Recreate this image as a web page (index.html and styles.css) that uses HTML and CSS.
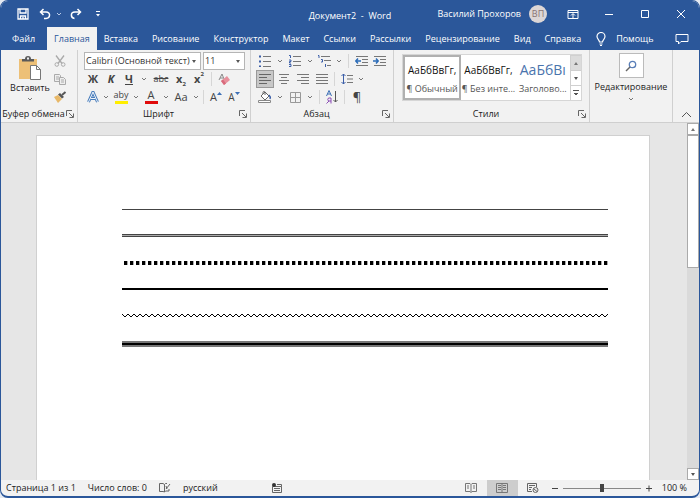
FILE: index.html
```
<!DOCTYPE html>
<html lang="ru">
<head>
  <meta charset="UTF-8">
  <meta name="viewport" content="width=device-width, initial-scale=1.0">
  <title>Документ2 - Word</title>
  <link rel="stylesheet" href="styles.css">
</head>
<body>
<svg class="defs" aria-hidden="true">
  <symbol id="chev" viewBox="0 0 6 6"><path d="M1 2l2 2 2-2" fill="none" stroke="#777"/></symbol>
  <symbol id="launch" viewBox="0 0 8 8"><path d="M.5 6V.5H6M3 3l4 4M7.500 3.500v4h-4" fill="none" stroke="#666"/></symbol>
</svg>

<div class="window">
  <header class="titlebar">
    <div class="quick">
      <button aria-label="Сохранить"><svg width="12" height="12" viewBox="0 0 12 12"><path d="M1 1h10v10H1zM3 1v4h6V1M3.500 11V8h5v3M6 9v2" fill="none" stroke="#fff" stroke-width="1.300"/></svg></button>
      <button aria-label="Отменить"><svg width="12" height="12" viewBox="0 0 12 12"><path d="M4.500 1L1.500 4l3 3M1.500 4H7c5 0 4.500 6 0 6.500H5" fill="none" stroke="#fff" stroke-width="1.500"/></svg></button>
      <button class="narrow" aria-label="Список отмены"><svg width="6" height="6" viewBox="0 0 6 6"><path d="M1 2l2 2 2-2" fill="none" stroke="#b9cbe8"/></svg></button>
      <button aria-label="Повторить"><svg width="12" height="12" viewBox="0 0 12 12"><path d="M7.500 1l3 3-3 3M10.500 4H5C0 4 .5 10 4.500 10.500" fill="none" stroke="#fff" stroke-width="1.500"/></svg></button>
      <button aria-label="Настройка панели"><svg width="6" height="6" viewBox="0 0 6 6"><path d="M1 .5h4" stroke="#fff"/><path d="M1 3h4L3 5.500z" fill="#fff"/></svg></button>
    </div>
    <h1>Документ2&nbsp; -&nbsp; Word</h1>
    <div class="account">
      <span>Василий Прохоров</span>
      <span class="avatar">ВП</span>
      <div class="controls">
        <button aria-label="Параметры ленты"><svg width="12" height="10" viewBox="0 0 12 10"><path d="M1 1.500h10v8H1zM1 3.500h10M6 9V5M4 6.500l2-2 2 2" fill="none" stroke="#fff"/></svg></button>
        <button aria-label="Свернуть"><svg width="10" height="10" viewBox="0 0 10 10"><path d="M1 5.500h8" stroke="#fff"/></svg></button>
        <button aria-label="Развернуть"><svg width="10" height="10" viewBox="0 0 10 10"><path d="M1.500 1.500h7v7h-7z" fill="none" stroke="#fff"/></svg></button>
        <button aria-label="Закрыть"><svg width="10" height="10" viewBox="0 0 10 10"><path d="M1 1l8 8M9 1L1 9" stroke="#fff"/></svg></button>
      </div>
    </div>
  </header>

  <nav class="tabs">
    <a class="file" href="#">Файл</a>
    <a class="active" href="#">Главная</a>
    <a href="#">Вставка</a>
    <a href="#">Рисование</a>
    <a href="#">Конструктор</a>
    <a href="#">Макет</a>
    <a href="#">Ссылки</a>
    <a href="#">Рассылки</a>
    <a href="#">Рецензирование</a>
    <a href="#">Вид</a>
    <a href="#">Справка</a>
    <a class="help" href="#">
      <svg width="10" height="14" viewBox="0 0 10 14"><path d="M3.500 10C3.500 8 1 7 1 4.500a4 4 0 0 1 8 0C9 7 6.500 8 6.500 10zM3.500 12h3M4 13.500h2" fill="none" stroke="#fff" stroke-width="1.200"/></svg>
      <span>Помощь</span>
    </a>
    <button class="comment" aria-label="Примечания"><svg width="14" height="12" viewBox="0 0 14 12"><path d="M1 1.500h12v7H6l-2.500 2.500V8.500H1z" fill="none" stroke="#fff"/></svg></button>
  </nav>

  <section class="ribbon" aria-label="Лента">
    <div class="group clipboard">
      <div class="body">
        <button class="paste">
          <svg width="24" height="24" viewBox="0 0 24 24"><path d="M1 3h18v20H1z" fill="#edc077"/><path d="M4 5.500V3h3a3 3 0 0 1 6 0h3v2.500z" fill="#5a5a5a"/><path d="M9 1.500h2v2H9z" fill="#eee"/><path d="M12.500 9.500h6l4 4v10h-10z" fill="#fff" stroke="#777"/><path d="M18.500 9.500v4h4" fill="none" stroke="#777"/></svg>
          <span>Вставить</span>
          <svg width="6" height="6"><use href="#chev"/></svg>
        </button>
        <div class="stack">
          <button aria-label="Вырезать"><svg width="12" height="12" viewBox="0 0 12 12"><path d="M2 .5l6 8M10 .5l-6 8" stroke="#aaa" stroke-width="1.300"/><circle cx="2.800" cy="9.500" r="1.800" fill="none" stroke="#aaa"/><circle cx="9.200" cy="9.500" r="1.800" fill="none" stroke="#aaa"/></svg></button>
          <button aria-label="Копировать"><svg width="12" height="12" viewBox="0 0 12 12"><path d="M.5 1.500h5l1 1v6h-6zM2 4h3M2 6h3" fill="#eee" stroke="#aaa"/><path d="M5.500 4.500h4l2 2v5h-6zM7 7h3M7 9h3" fill="#eee" stroke="#aaa"/></svg></button>
          <button aria-label="Формат по образцу"><svg width="14" height="12" viewBox="0 0 14 12"><path d="M1 6l4-2 4 4-4 4z" fill="#e8b868"/><path d="M5 3.500l2-1.500 4 4-2 1.500z" fill="#555"/><path d="M9 4l3.500-3" stroke="#555" stroke-width="2"/></svg></button>
        </div>
      </div>
      <footer><span>Буфер обмена</span><button aria-label="Буфер обмена: параметры"><svg width="8" height="8"><use href="#launch"/></svg></button></footer>
    </div>

    <div class="group font">
      <div class="body rows">
        <div class="row boxes">
          <label class="combo family"><select aria-label="Шрифт"><option>Calibri (Основной текст)</option></select><i class="arrow"></i></label>
          <label class="combo size"><select aria-label="Размер шрифта"><option>11</option></select><i class="arrow"></i></label>
        </div>
        <div class="row">
          <button class="glyph bold">Ж</button>
          <button class="glyph bold italic">К</button>
          <button class="glyph bold under">Ч</button>
          <button class="drop far" aria-label="Вид подчёркивания"><svg width="6" height="6"><use href="#chev"/></svg></button>
          <button class="glyph mid strike">abc</button>
          <button class="glyph bold">x<sub>2</sub></button>
          <button class="glyph bold">x<sup>2</sup></button>
          <i class="sep"></i>
          <button aria-label="Очистить формат"><svg width="14" height="14" viewBox="0 0 14 14"><path d="M2 8l3-6 2 5M3 6h3" fill="none" stroke="#888"/><path d="M4 9l6-5 3 4-6 5z" fill="#e8909c"/><path d="M4 9l2-1.500 3 4L7 13z" fill="#d86a7c"/></svg></button>
        </div>
        <div class="row">
          <button aria-label="Текстовые эффекты"><svg width="12" height="12" viewBox="0 0 12 12"><path d="M1.500 11L6 1l4.500 10M3.500 7.500h5" fill="none" stroke="#4a7ebb" stroke-width="3"/><path d="M1.500 11L6 1l4.500 10M3.500 7.500h5" fill="none" stroke="#eef4fc"/></svg></button>
          <button class="drop" aria-label="Эффекты"><svg width="6" height="6"><use href="#chev"/></svg></button>
          <button class="glyph mid marker">aby</button>
          <button class="drop" aria-label="Цвет выделения"><svg width="6" height="6"><use href="#chev"/></svg></button>
          <button class="glyph mid colour">A</button>
          <button class="drop" aria-label="Цвет текста"><svg width="6" height="6"><use href="#chev"/></svg></button>
          <button class="glyph mid case">Aa</button>
          <button class="drop" aria-label="Регистр"><svg width="6" height="6"><use href="#chev"/></svg></button>
          <i class="sep"></i>
          <button class="glyph grow">A<svg width="5" height="10" viewBox="0 0 5 10"><path d="M0 3l2.500-3L5 3z" fill="#3b6eb5"/></svg></button>
          <button class="glyph shrink">A<svg width="5" height="10" viewBox="0 0 5 10"><path d="M0 0h5L2.500 3z" fill="#3b6eb5"/></svg></button>
        </div>
      </div>
      <footer><span>Шрифт</span><button aria-label="Шрифт: параметры"><svg width="8" height="8"><use href="#launch"/></svg></button></footer>
    </div>

    <div class="group para">
      <div class="body rows">
        <div class="row">
          <button aria-label="Маркеры"><svg width="12" height="12" viewBox="0 0 12 12"><path d="M4 1.500h8M4 6.500h8M4 11.500h8" stroke="#777"/><path d="M0 1.500h2M0 6.500h2M0 11.500h2" stroke="#3b5ea8" stroke-width="2"/></svg></button>
          <button class="drop far" aria-label="Маркеры: список"><svg width="6" height="6"><use href="#chev"/></svg></button>
          <button aria-label="Нумерация"><svg width="12" height="12" viewBox="0 0 12 12"><path d="M4 1.500h8M4 6.500h8M4 10.500h8" stroke="#777"/><path d="M0 .5h1.500V3M0 5h2v1.500H.5V8H2M0 9.500h2v2H0" fill="none" stroke="#3b5ea8"/></svg></button>
          <button class="drop far" aria-label="Нумерация: список"><svg width="6" height="6"><use href="#chev"/></svg></button>
          <button aria-label="Многоуровневый список"><svg width="13" height="12" viewBox="0 0 13 12"><path d="M3 1.500h9M6 5.500h7M9 10.500h4" stroke="#777"/><path d="M0 .5h1V3M3 4.500h1.500V7H3M7.500 9v3" fill="none" stroke="#3b5ea8"/></svg></button>
          <button class="drop far" aria-label="Уровни"><svg width="6" height="6"><use href="#chev"/></svg></button>
          <i class="sep"></i>
          <button aria-label="Уменьшить отступ"><svg width="13" height="10" viewBox="0 0 13 10"><path d="M1 .5h12M7 3.500h6M7 6.500h6M1 9.500h12" stroke="#777"/><path d="M6 5H1M3 2.500L.8 5 3 7.500" fill="none" stroke="#2b6cb8" stroke-width="1.500"/></svg></button>
          <button aria-label="Увеличить отступ"><svg width="13" height="10" viewBox="0 0 13 10"><path d="M1 .5h12M7 3.500h6M7 6.500h6M1 9.500h12" stroke="#777"/><path d="M0 5h5M3 2.500L5.200 5 3 7.500" fill="none" stroke="#2b6cb8" stroke-width="1.500"/></svg></button>
        </div>
        <div class="row align">
          <button class="pressed" aria-label="По левому краю"><svg width="12" height="10" viewBox="0 0 12 10"><path d="M0 .5h12M0 3.500h8M0 6.500h12M0 9.500h8" stroke="#666"/></svg></button>
          <button aria-label="По центру"><svg width="12" height="10" viewBox="0 0 12 10"><path d="M1 .5h10M3 3.500h6M1 6.500h10M3 9.500h6" stroke="#777"/></svg></button>
          <button aria-label="По правому краю"><svg width="12" height="10" viewBox="0 0 12 10"><path d="M0 .5h12M4 3.500h8M0 6.500h12M4 9.500h8" stroke="#777"/></svg></button>
          <button aria-label="По ширине"><svg width="12" height="10" viewBox="0 0 12 10"><path d="M0 .5h12M0 3.500h12M0 6.500h12M0 9.500h12" stroke="#777"/></svg></button>
          <i class="sep"></i>
          <button aria-label="Интервал"><svg width="12" height="12" viewBox="0 0 12 12"><path d="M6 2.500h6M6 6h6M6 9.500h6" stroke="#777"/><path d="M2.500 1v10M.5 3l2-2 2 2M.5 9l2 2 2-2" fill="none" stroke="#3b5ea8"/></svg></button>
          <button class="drop" aria-label="Интервал: список"><svg width="6" height="6"><use href="#chev"/></svg></button>
        </div>
        <div class="row">
          <button aria-label="Заливка"><svg width="14" height="12" viewBox="0 0 14 12"><path d="M3 5l4-4 4 4-4 4zM5 3V1.500a1 1 0 0 1 2 0V4" fill="#fff" stroke="#666"/><path d="M11 4q2 2 1 4" fill="none" stroke="#3b5ea8" stroke-width="1.500"/><path d="M.5 9.500h12v2H.5z" fill="#fff" stroke="#888"/></svg></button>
          <button class="drop far" aria-label="Заливка: список"><svg width="6" height="6"><use href="#chev"/></svg></button>
          <button aria-label="Границы"><svg width="11" height="11" viewBox="0 0 11 11"><path d="M.5.5h10v10H.5zM5.500 0v11M0 5.500h11" fill="none" stroke="#999"/></svg></button>
          <button class="drop far" aria-label="Границы: список"><svg width="6" height="6"><use href="#chev"/></svg></button>
          <i class="sep"></i>
          <button class="sort" aria-label="Сортировка">
            <svg width="12" height="14" viewBox="0 0 12 14"><path d="M.5 6L3 .5 5.500 6M1.500 4h3" fill="none" stroke="#3b6eb5"/><path d="M5 13.500V8H2.500q-1.500 1.500 0 3H5M3 11L.5 13.500" fill="none" stroke="#8a4db5"/><path d="M9.500 1v11M7.500 10l2 2 2-2" fill="none" stroke="#555"/></svg>
          </button>
          <i class="sep"></i>
          <button class="glyph pilcrow">¶</button>
        </div>
      </div>
      <footer><span>Абзац</span><button aria-label="Абзац: параметры"><svg width="8" height="8"><use href="#launch"/></svg></button></footer>
    </div>

    <div class="group styles">
      <div class="body">
        <div class="gallery">
          <button class="style chosen"><b>АаБбВвГг,</b><span>¶ Обычный</span></button>
          <button class="style"><b>АаБбВвГг,</b><span>¶ Без инте...</span></button>
          <button class="style heading"><b>АаБбВı</b><span>Заголово...</span></button>
          <div class="scroller">
            <button class="off" aria-label="Вверх"><i class="arrow up"></i></button>
            <button aria-label="Вниз"><i class="arrow"></i></button>
            <button aria-label="Все стили"><i class="arrow lined"></i></button>
          </div>
        </div>
      </div>
      <footer><span>Стили</span><button aria-label="Стили: параметры"><svg width="8" height="8"><use href="#launch"/></svg></button></footer>
    </div>

    <div class="group editing">
      <button class="edit">
        <span class="box"><svg width="12" height="12" viewBox="0 0 12 12"><circle cx="7.500" cy="4.500" r="3.200" fill="none" stroke="#5a7fb8" stroke-width="1.300"/><path d="M5 7l-4 4" stroke="#666" stroke-width="1.500"/></svg></span>
        <span>Редактирование</span>
        <svg width="6" height="6"><use href="#chev"/></svg>
      </button>
    </div>
    <button class="collapse" aria-label="Свернуть ленту"><svg width="11" height="7" viewBox="0 0 11 7"><path d="M1 6l4.500-4.500L10 6" fill="none" stroke="#555"/></svg></button>
  </section>

  <main class="workspace">
    <article class="page">
      <hr class="thin">
      <hr class="double">
      <hr class="dots">
      <hr class="thick">
      <svg class="wave" height="5" aria-hidden="true">
        <pattern id="zig" width="6" height="5" patternUnits="userSpaceOnUse"><path d="M-1 0l1 1 3 3 3-3 1-1" fill="none" stroke="#000"/></pattern>
        <rect width="100%" height="5" fill="url(#zig)"/>
      </svg>
      <hr class="triple">
    </article>
    <div class="scrollbar">
      <button aria-label="Прокрутить вверх"><i class="arrow up"></i></button>
      <div class="track"><div class="thumb"></div></div>
      <button aria-label="Прокрутить вниз"><i class="arrow"></i></button>
    </div>
  </main>

  <footer class="status">
    <span>Страница 1 из 1</span>
    <span>Число слов: 0</span>
    <button aria-label="Правописание"><svg width="12" height="10" viewBox="0 0 12 10"><path d="M5.500 9V1.500L4 .5H.5v8H4zl1-1H10V6M5.500 1.500l1-1H8" fill="none" stroke="#666"/><path d="M7 6l4-5M7 3l1 3" stroke="#666" fill="none"/></svg></button>
    <span>русский</span>
    <button class="macro" aria-label="Макрос"><svg width="10" height="10" viewBox="0 0 10 10"><path d="M.5 3.500h9v6h-9zM5 1.500h4.500v2M2 5.500h6M2 7.500h6" fill="none" stroke="#666"/><circle cx="2" cy="2" r="2" fill="#333"/></svg></button>
    <div class="views">
      <button aria-label="Режим чтения"><svg width="12" height="10" viewBox="0 0 12 10"><path d="M6 9.500V1.500L5 .5H.5v8H5zl1-1h4.500v-8H7l-1 1M2 3h2M2 5h2M8 3h2M8 5h2" fill="none" stroke="#777"/></svg></button>
      <button class="on" aria-label="Разметка страницы"><svg width="12" height="10" viewBox="0 0 12 10"><path d="M.5.500h11v9H.5zM6 0v10M2 2.500h3M2 4.500h3M2 6.500h3M7 2.500h3M7 4.500h3M7 6.500h3" fill="none" stroke="#777"/></svg></button>
      <button aria-label="Веб-документ"><svg width="12" height="10" viewBox="0 0 12 10"><path d="M5 8.500H.5v-8h9V4M2 2.500h6M2 4.500h3M2 6.500h2" fill="none" stroke="#666"/><circle cx="8.500" cy="7" r="2.500" fill="#eee" stroke="#666"/><path d="M7 6l3 2.500" stroke="#666"/></svg></button>
      <div class="zoom">
        <button aria-label="Мельче"><svg width="8" height="8" viewBox="0 0 8 8"><path d="M1 4.500h6" stroke="#444"/></svg></button>
        <input type="range" min="0" max="100" value="50" aria-label="Масштаб">
        <button aria-label="Крупнее"><svg width="8" height="8" viewBox="0 0 8 8"><path d="M1 4.500h6M4 1.500v6" stroke="#444"/></svg></button>
        <span>100 %</span>
      </div>
    </div>
  </footer>
</div>
</body>
</html>
```

FILE: styles.css
```
* {
  box-sizing: border-box;
}

body {
  margin: 0;
  background: #e4e9f2;
  font: 9px/14px "Open Sans", "Noto Sans", sans-serif;
  color: #222;
}

button {
  display: flex;
  align-items: center;
  justify-content: center;
  padding: 0;
  border: 0;
  background: none;
  color: inherit;
  font: inherit;
}

svg {
  display: block;
  flex: none;
}

.defs {
  position: absolute;
  width: 0;
  height: 0;
}

.window {
  display: flex;
  flex-direction: column;
  height: 100vh;
  border: 1px solid #2b579a;
  border-bottom-width: 2px;
  border-radius: 8px;
  background: #f2f2f2;
  overflow: hidden;
}

/* title bar */
.titlebar {
  display: grid;
  grid-template-columns: 1fr auto 1fr;
  align-items: center;
  height: 26px;
  background: #2b579a;
  color: #fff;
}

.titlebar h1 {
  margin: 0;
  padding-top: 4px;
  font-size: 9px;
  font-weight: 400;
}

.quick {
  display: flex;
  align-items: center;
  padding-left: 11px;
}

.quick button {
  width: 22px;
}

.quick .narrow {
  width: 6px;
  margin-right: 3px;
}

.account {
  display: flex;
  align-items: center;
  justify-content: flex-end;
}

.avatar {
  width: 18px;
  height: 18px;
  margin: 0 8px;
  border-radius: 50%;
  background: #dcd6d6;
  color: #8a7474;
  line-height: 18px;
  text-align: center;
}

.controls {
  display: flex;
}

.controls button {
  width: 36px;
}

/* tabs */
.tabs {
  display: flex;
  align-items: stretch;
  height: 23px;
  background: #2b579a;
}

.tabs a {
  padding: 0 7px;
  color: #fff;
  font-weight: 500;
  line-height: 24px;
  text-decoration: none;
}

.tabs .file {
  padding: 0 12px 0 11px;
}

.tabs .active {
  background: #f2f2f2;
  color: #2b579a;
}

.tabs .help {
  display: flex;
  align-items: center;
  gap: 10px;
  padding: 0 0 0 8px;
}

.comment {
  margin: 0 10px 0 auto;
}

/* ribbon */
.ribbon {
  display: flex;
  height: 73px;
  border-bottom: 1px solid #cfcfcf;
}

.group {
  display: flex;
  flex-direction: column;
  flex: none;
  padding-top: 2px;
  border-right: 1px solid #d0d0d0;
}

.group .body {
  height: 54px;
}

.group footer {
  display: flex;
  align-items: center;
  height: 17px;
  padding-right: 3px;
}

.group footer span {
  flex: 1;
  text-align: center;
  white-space: nowrap;
}

.clipboard {
  width: 77px;
}

.clipboard .body {
  display: flex;
}

.paste {
  flex-direction: column;
  justify-content: flex-start;
  gap: 1px;
  width: 50px;
  margin-left: 4px;
  padding-top: 4px;
}

.stack {
  display: flex;
  flex-direction: column;
}

.stack button {
  width: 10px;
  height: 18px;
}

.font {
  width: 173px;
}

.para {
  width: 143px;
}

.rows {
  padding: 0 5px;
}

.font .rows {
  padding-left: 6px;
}

.row {
  display: flex;
  align-items: center;
  height: 18px;
}

.row button {
  width: 18px;
  height: 18px;
}

.row .drop {
  width: 8px;
}

.row .far {
  width: 12px;
}

.row .mid {
  width: 22px;
}

.row .pressed {
  border: 1px solid #999;
  background: #c8c8c8;
}

.align {
  gap: 1px;
}

.sep {
  width: 1px;
  height: 14px;
  margin: 0 3px;
  background: #d6d6d6;
}

.align .sep {
  margin: 0 2px;
}

.boxes {
  gap: 2px;
}

.combo {
  display: flex;
  align-items: center;
  height: 18px;
  padding-right: 4px;
  border: 1px solid #b5b5b5;
  background: #fff;
}

.combo select {
  flex: 1;
  min-width: 0;
  padding: 0 0 0 1px;
  border: 0;
  background: none;
  color: #333;
  font: inherit;
  appearance: none;
}

.family {
  width: 117px;
}

.size {
  width: 42px;
}

.arrow {
  border: 2px solid transparent;
  border-top: 3px solid #555;
  border-bottom: 0;
}

.arrow.up {
  border-top: 0;
  border-bottom: 3px solid #777;
}

.arrow.lined {
  width: 6px;
  height: 6px;
  border: 0;
  border-top: 1px solid #555;
  background: linear-gradient(#555, #555) center 2px / 4px 1px no-repeat, linear-gradient(#555, #555) center 3px / 2px 1px no-repeat;
}

.glyph {
  color: #444;
  font-size: 11px;
}

.bold {
  font-weight: 700;
}

.italic {
  font-style: italic;
}

.under {
  text-decoration: underline;
}

.strike {
  font-size: 9px;
  text-decoration: line-through;
}

.glyph sub,
.glyph sup {
  font-size: 6px;
  line-height: 8px;
}

.glyph sub {
  align-self: flex-end;
}

.glyph sup {
  align-self: flex-start;
}

.row .marker,
.row .colour {
  height: 14px;
  background: linear-gradient(#ffee00, #ffee00) center bottom / 13px 3px no-repeat;
  font-size: 9px;
  line-height: 10px;
  padding-bottom: 4px;
}

.row .colour {
  background-image: linear-gradient(#e00b0b, #e00b0b);
  font-size: 11px;
}

.shrink {
  font-size: 10px;
}

.pilcrow {
  font-size: 13px;
}

/* styles gallery */
.styles {
  flex: 1;
  min-width: 0;
}

.styles .body {
  padding: 2px 7px 0 8px;
}

.gallery {
  display: flex;
  height: 47px;
  border: 1px solid #d6d6d6;
  background: #fff;
}

.style {
  flex: 1;
  flex-direction: column;
  min-width: 0;
  overflow: hidden;
  white-space: nowrap;
}

.style b {
  height: 22px;
  color: #111;
  font-size: 10px;
  font-weight: 400;
  line-height: 22px;
}

.style span {
  height: 16px;
  color: #555;
  line-height: 16px;
}

.chosen {
  border: 2px solid #b0b0b0;
}

.heading b {
  color: #4a74ad;
  font-size: 14px;
}

.scroller {
  display: flex;
  flex-direction: column;
  width: 11px;
  border-left: 1px solid #d0d0d0;
}

.scroller button {
  flex: 1;
  border-top: 1px solid #d0d0d0;
}

.scroller .off {
  background: #dcdcdc;
}

.editing {
  width: 83px;
}

.edit {
  flex-direction: column;
  gap: 2px;
  padding-top: 1px;
}

.edit .box {
  display: flex;
  align-items: center;
  justify-content: center;
  width: 25px;
  height: 25px;
  border: 1px solid #bbb;
  background: #fff;
}

.collapse {
  width: 26px;
  height: 16px;
  align-self: flex-end;
}

/* document */
.workspace {
  display: flex;
  flex: 1;
  min-height: 0;
  background: #e6e6e6;
}

.page {
  flex: 1;
  margin: 12px 37px 0 35px;
  padding: 73px 41px 0 85px;
  border: 1px solid #d0d0d0;
  border-bottom: 0;
  background: #fff;
}

.page hr {
  margin: 0 0 24px;
  border: 0;
}

.thin {
  height: 1px;
  background: #444;
}

.double {
  height: 3px;
  background: linear-gradient(#444 1px, #aaa 1px 2px, #444 2px);
}

.page .dots {
  height: 4px;
  margin-left: 2px;
  margin-bottom: 23px;
  background: repeating-linear-gradient(90deg, #000 0 3px, #aaa 3px 4px, #fff 4px 6px);
}

.page .thick {
  height: 2px;
  margin-bottom: 23px;
  background: #000;
}

.wave {
  width: 100%;
  margin-bottom: 23px;
}

.triple {
  height: 6px;
  background: linear-gradient(#777 2px, #000 2px 4px, #777 4px);
}

.scrollbar {
  display: flex;
  flex-direction: column;
  width: 12px;
  background: #dadada;
}

.scrollbar button {
  height: 12px;
  border: 1px solid #aaa;
  background: #fff;
}

.track {
  flex: 1;
}

.thumb {
  height: 40%;
  border: 1px solid #aaa;
  background: #fff;
}

/* status bar */
.status {
  display: flex;
  align-items: center;
  gap: 12px;
  height: 16px;
  padding: 0 12px 0 5px;
}

.macro {
  margin-left: 42px;
}

.views {
  display: flex;
  margin-left: auto;
}

.views button {
  width: 31px;
  height: 16px;
}

.views .on {
  background: #cdcdcd;
}

.zoom {
  display: flex;
  align-items: center;
  gap: 4px;
  margin-left: 2px;
}

.zoom button {
  width: 8px;
}

.zoom span {
  margin-left: 5px;
}

.zoom input {
  width: 78px;
  height: 10px;
  margin: 0;
  background: linear-gradient(#888, #888) center / 100% 1px no-repeat;
  appearance: none;
}

.zoom input::-webkit-slider-thumb {
  width: 4px;
  height: 8px;
  background: #444;
  appearance: none;
}
```
